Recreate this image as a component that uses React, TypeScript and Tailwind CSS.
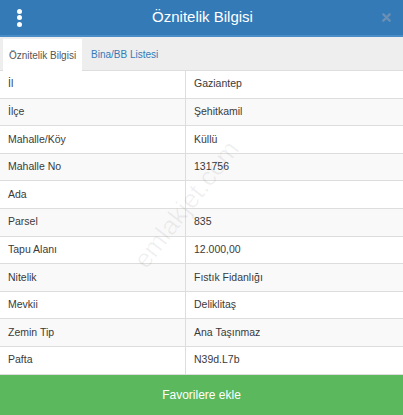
import React from 'react';

const rows: [string, string][] = [
  ['İl', 'Gaziantep'],
  ['İlçe', 'Şehitkamil'],
  ['Mahalle/Köy', 'Küllü'],
  ['Mahalle No', '131756'],
  ['Ada', ''],
  ['Parsel', '835'],
  ['Tapu Alanı', '12.000,00'],
  ['Nitelik', 'Fıstık Fidanlığı'],
  ['Mevkii', 'Deliklitaş'],
  ['Zemin Tip', 'Ana Taşınmaz'],
  ['Pafta', 'N39d.L7b'],
];

const App: React.FC = () => {
  return (
    <div className="relative w-[403px] h-[415px] overflow-hidden bg-white flex flex-col font-['Liberation_Sans',Arial,sans-serif]">
      {/* Header */}
      <div className="h-[37px] bg-[#337ab7] border-b-2 border-[#4a8cc6] flex items-center pl-[15px] pr-[12px] shrink-0">
        <div className="w-[8px] flex flex-col items-center gap-[1.5px]">
          <span className="w-[5px] h-[5px] rounded-full bg-white"></span>
          <span className="w-[5px] h-[5px] rounded-full bg-white"></span>
          <span className="w-[5px] h-[5px] rounded-full bg-white"></span>
        </div>
        <div className="flex-1 text-center text-white text-[15px]">Öznitelik Bilgisi</div>
        <svg width="9" height="9" viewBox="0 0 10 10">
          <path d="M1.5 1.5 L8.5 8.5 M8.5 1.5 L1.5 8.5" stroke="#6b8fb3" strokeWidth="2.6" strokeLinecap="round" />
        </svg>
      </div>

      {/* Tabs */}
      <div className="h-[34px] bg-[#eeeeee] flex items-end pl-[3px] border-b border-[#dddddd] shrink-0">
        <div className="h-[32px] w-[79px] bg-white flex items-center justify-center text-[10px] text-[#555555] -mb-px">
          Öznitelik Bilgisi
        </div>
        <div className="h-[32px] pl-[9px] flex items-center text-[10px] text-[#337ab7]">
          Bina/BB Listesi
        </div>
      </div>

      {/* Table */}
      <div className="flex flex-col shrink-0">
        {rows.map(([k, v], i) => (
          <div
            key={k}
            className={`h-[27.6px] flex text-[10.5px] text-[#3a3a3a] border-b border-[#dddddd] ${i % 2 === 1 ? 'bg-[#f9f9f9]' : 'bg-white'}`}
          >
            <div className="w-[186px] pl-[8px] flex items-center border-r border-[#dddddd]">{k}</div>
            <div className="flex-1 pl-[8px] flex items-center">{v}</div>
          </div>
        ))}
      </div>

      {/* Button */}
      <div className="flex-1 bg-[#5cb85c] flex items-center justify-center text-white text-[12px]">
        Favorilere ekle
      </div>

      {/* Watermark */}
      <div className="absolute left-[110px] top-[185px] -rotate-[52deg] text-[26px] text-[#000000]/[0.06] pointer-events-none select-none">
        emlakjet.com
      </div>
    </div>
  );
};

export default App;
